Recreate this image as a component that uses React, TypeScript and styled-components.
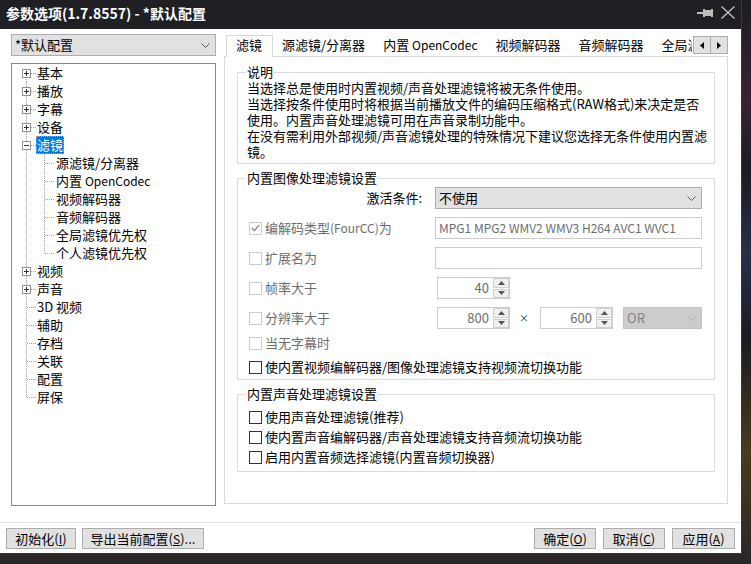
import React from "react";
import styled, { createGlobalStyle } from "styled-components";

const FONT = `"Noto Sans CJK SC", "Noto Sans CJK JP", "Noto Sans", sans-serif`;

const GlobalStyle = createGlobalStyle`
  *, *::before, *::after { box-sizing: border-box; }
  html, body { margin: 0; padding: 0; }
  body {
    width: 751px; height: 564px; overflow: hidden;
    background: #1d1b22;
    font-family: ${FONT}; font-size: 13px; color: #000;
  }
`;

const Desktop = styled.div`
  width: 751px;
  height: 564px;
  overflow: hidden;
  background:
    linear-gradient(180deg, #1e1c24 0%, #3a2233 18%, #1c1a22 30%, #27304a 45%, #1c1a22 60%, #4a3a1e 80%, #2a2627 100%);
`;

const Window = styled.div`
  width: 742px;
  height: 554px;
  background: #fff;
  border-right: 1px solid #3a3a3a;
  border-bottom: 1px solid #3a3a3a;
  display: flex;
  flex-direction: column;
`;

const TitleBar = styled.div`
  height: 29px;
  flex: none;
  background: #1f1f24;
  color: #fff;
  display: flex;
  align-items: center;
  padding: 0 6px 4px 6px;
  gap: 8px;
`;

const TitleText = styled.div`
  flex: 1;
  font-size: 14px;
  line-height: 18px;
  font-weight: 700;
  white-space: nowrap;
`;

const Lat = styled.span`
  font-size: 12px;
`;

const Main = styled.div`
  height: 493px;
  flex: none;
  display: flex;
  gap: 8px;
  padding: 5px 0 0 11px;
`;

const LeftCol = styled.div`
  width: 205px;
  display: flex;
  flex-direction: column;
  gap: 7px;
`;

const RightCol = styled.div`
  width: 504px;
  display: flex;
  flex-direction: column;
`;

const Combo = styled.div<{ $w?: number; $disabled?: boolean }>`
  height: 22px;
  ${(p) => (p.$w ? `width: ${p.$w}px; flex: none;` : "")}
  border: 1px solid ${(p) => (p.$disabled ? "#c2c2c2" : "#adadad")};
  background: ${(p) => (p.$disabled ? "#cccccc" : "#e1e1e1")};
  color: ${(p) => (p.$disabled ? "#838383" : "#000")};
  display: flex;
  align-items: center;
  justify-content: space-between;
  padding: 0 5px 0 3px;
  font-size: 13px;
  line-height: 18px;
  white-space: nowrap;
`;

const Tree = styled.ul`
  height: 443px;
  margin: 0;
  padding: 0;
  list-style: none;
  border: 1px solid #828790;
  background: #fff;
  overflow: hidden;
`;

const TreeRow = styled.li`
  height: 18px;
  display: flex;
  align-items: stretch;
`;

const TreeLabel = styled.span<{ $selected?: boolean }>`
  height: 18px;
  line-height: 16px;
  font-size: 13px;
  white-space: nowrap;
  border: 1px ${(p) => (p.$selected ? "dotted #f0a040" : "solid transparent")};
  background: ${(p) => (p.$selected ? "#0078d7" : "transparent")};
  color: ${(p) => (p.$selected ? "#fff" : "#000")};
`;

const TabStrip = styled.div`
  height: 23px;
  margin-bottom: -1px;
  display: flex;
  align-items: flex-end;
`;

const Tabs = styled.div`
  flex: 1;
  min-width: 0;
  height: 23px;
  overflow: hidden;
  display: flex;
  align-items: flex-end;
  padding-left: 2px;
`;

const Tab = styled.div<{ $active?: boolean }>`
  flex: none;
  white-space: nowrap;
  font-size: 13px;
  line-height: 18px;
  ${(p) =>
    p.$active
      ? `height: 22px; position: relative; z-index: 1; background: #fff;
         border: 1px solid #d9d9d9; border-bottom: none; padding: 0 10px 0 9px;`
      : `height: 20px; margin-bottom: 1px; padding: 0 9px;`}
`;

const Scroller = styled.div`
  align-self: flex-start;
  margin: 2px 0 0 1px;
  display: flex;
`;

const ScrollBtn = styled.div`
  width: 18px;
  height: 18px;
  border: 1px solid #adadad;
  background: #e1e1e1;
  display: flex;
  align-items: center;
  justify-content: center;
  & + & { margin-left: -1px; }
`;

const Panel = styled.div`
  height: 448px;
  border: 1px solid #d9d9d9;
  background: #fff;
  padding: 7px 12px 0 12px;
  display: flex;
  flex-direction: column;
  gap: 6px;
`;

const Group = styled.fieldset<{ $pt: number; $pb: number }>`
  margin: 0;
  min-width: 0;
  border: 1px solid #dcdcdc;
  padding: ${(p) => p.$pt}px 11px ${(p) => p.$pb}px 11px;
`;

const Legend = styled.legend`
  padding: 0 1px;
  margin-left: -3px;
  font-size: 13px;
  line-height: 16px;
`;

const Desc = styled.div`
  margin-left: -2px;
  font-size: 13px;
  line-height: 16px;
  white-space: nowrap;
`;

const FormRow = styled.div<{ $mt: number }>`
  height: 22px;
  margin-top: ${(p) => p.$mt}px;
  display: grid;
  grid-template-columns: 186px 267px;
  align-items: center;
`;

const RightLabel = styled.div`
  text-align: right;
  padding-right: 13px;
  font-size: 13px;
  line-height: 18px;
  white-space: nowrap;
`;

const TextBox = styled.div`
  height: 22px;
  border: 1px solid #cccccc;
  background: #fff;
  color: #6d6d6d;
  padding: 0 3px;
  font-size: 12px;
  line-height: 20px;
  white-space: nowrap;
  overflow: hidden;
`;

const Inline = styled.div`
  display: flex;
  align-items: center;
`;

const SpinBox = styled.div`
  width: 73px;
  height: 22px;
  flex: none;
  margin-left: 2px;
  border: 1px solid #cccccc;
  background: #fff;
  display: flex;
`;

const SpinValue = styled.div`
  flex: 1;
  text-align: right;
  padding-right: 4px;
  color: #6d6d6d;
  font-size: 13px;
  line-height: 20px;
`;

const SpinButtons = styled.div`
  width: 16px;
  display: flex;
  flex-direction: column;
  gap: 1px;
`;

const SpinBtn = styled.div`
  flex: 1;
  border: 1px solid #d0d0d0;
  background: #f0f0f0;
  display: flex;
  align-items: center;
  justify-content: center;
`;

const Times = styled.div`
  width: 28px;
  text-align: center;
  color: #333;
  font-size: 10px;
  line-height: 12px;
`;

const CheckRow = styled.label<{ $mt: number; $disabled?: boolean }>`
  height: 16px;
  margin-top: ${(p) => p.$mt}px;
  display: flex;
  align-items: center;
  gap: 3px;
  font-size: 13px;
  line-height: 16px;
  white-space: nowrap;
  color: ${(p) => (p.$disabled ? "#6d6d6d" : "#000")};
`;

const Box = styled.span<{ $disabled?: boolean }>`
  width: 13px;
  height: 13px;
  flex: none;
  border: 1px solid ${(p) => (p.$disabled ? "#cccccc" : "#333333")};
  background: #fff;
  display: flex;
  align-items: center;
  justify-content: center;
`;

const Footer = styled.div`
  flex: 1;
  border-top: 1px solid #e3e3e3;
  display: flex;
  align-items: flex-start;
  justify-content: space-between;
  padding: 5px 6px 0 6px;
`;

const BtnGroup = styled.div<{ $gap: number }>`
  display: flex;
  gap: ${(p) => p.$gap}px;
`;

const Btn = styled.button<{ $w: number }>`
  width: ${(p) => p.$w}px;
  height: 21px;
  margin: 0;
  padding: 0;
  border: 1px solid #adadad;
  background: #e1e1e1;
  color: #000;
  font-family: ${FONT};
  font-size: 13px;
  line-height: 17px;
  white-space: nowrap;
  u { text-decoration: underline; text-underline-offset: 1px; font-size: 12px; }
`;

/* ---------- drawings ---------- */

const Chevron = ({ color = "#555" }: { color?: string }) => (
  <svg width="9" height="5" viewBox="0 0 9 5">
    <path d="M0.5 0.5 L4.5 4.5 L8.5 0.5" fill="none" stroke={color} strokeWidth="1" />
  </svg>
);

const Pin = () => (
  <svg width="16" height="12" viewBox="0 0 16 12" shapeRendering="crispEdges">
    <rect x="0" y="5" width="6" height="2" fill="#bdbdbd" />
    <rect x="6" y="2" width="2" height="8" fill="#bdbdbd" />
    <rect x="8" y="3" width="6" height="6" fill="#bdbdbd" />
    <rect x="14" y="2" width="2" height="8" fill="#bdbdbd" />
  </svg>
);

const CloseX = () => (
  <svg width="14" height="13" viewBox="0 0 14 13">
    <path d="M0.5 0.5 L13.5 12.5 M13.5 0.5 L0.5 12.5" stroke="#c4c4c4" strokeWidth="1.3" />
  </svg>
);

const Tri = ({ dir }: { dir: "left" | "right" }) => (
  <svg width="4" height="7" viewBox="0 0 4 7">
    <path d={dir === "left" ? "M4 0 L0 3.5 L4 7Z" : "M0 0 L4 3.5 L0 7Z"} fill="#000" />
  </svg>
);

const SpinArrow = ({ up }: { up?: boolean }) => (
  <svg width="7" height="4" viewBox="0 0 7 4">
    <path d={up ? "M0 4 L3.5 0 L7 4Z" : "M0 0 L3.5 4 L7 0Z"} fill="#555" />
  </svg>
);

const Check = () => (
  <svg width="9" height="8" viewBox="0 0 9 8">
    <path d="M0.8 4 L3.3 6.6 L8.2 1" fill="none" stroke="#8f8f8f" strokeWidth="1.4" />
  </svg>
);

const DOT = "#a0a0a0";

const TopGutter = ({
  first,
  last,
  exp,
}: {
  first?: boolean;
  last?: boolean;
  exp?: "plus" | "minus";
}) => (
  <svg width="24" height="18" viewBox="0 0 24 18" shapeRendering="crispEdges">
    <line x1="14.5" y1={first ? 9 : 0} x2="14.5" y2={last ? 10 : 18} stroke={DOT} strokeDasharray="1 1" />
    <line x1={exp ? 19 : 15} y1="9.5" x2="24" y2="9.5" stroke={DOT} strokeDasharray="1 1" />
    {exp && (
      <>
        <rect x="10.5" y="5.5" width="8" height="8" fill="#fff" stroke="#919191" />
        <line x1="12" y1="9.5" x2="17" y2="9.5" stroke="#333" />
        {exp === "plus" && <line x1="14.5" y1="7" x2="14.5" y2="12" stroke="#333" />}
      </>
    )}
  </svg>
);

const ChildGutter = ({ last }: { last?: boolean }) => (
  <>
    <svg width="24" height="18" viewBox="0 0 24 18" shapeRendering="crispEdges">
      <line x1="14.5" y1="0" x2="14.5" y2="18" stroke={DOT} strokeDasharray="1 1" />
    </svg>
    <svg width="19" height="18" viewBox="0 0 19 18" shapeRendering="crispEdges">
      <line x1="8.5" y1="0" x2="8.5" y2={last ? 10 : 18} stroke={DOT} strokeDasharray="1 1" />
      <line x1="9" y1="9.5" x2="19" y2="9.5" stroke={DOT} strokeDasharray="1 1" />
    </svg>
  </>
);

/* ---------- data ---------- */

const OpenCodec = () => (
  <>
    内置 <Lat>OpenCodec</Lat>
  </>
);

type Node = { key: string; label: React.ReactNode; exp?: "plus" | "minus"; selected?: boolean; children?: { key: string; label: React.ReactNode }[] };

const tree: Node[] = [
  { key: "基本", label: "基本", exp: "plus" },
  { key: "播放", label: "播放", exp: "plus" },
  { key: "字幕", label: "字幕", exp: "plus" },
  { key: "设备", label: "设备", exp: "plus" },
  {
    key: "滤镜",
    label: "滤镜",
    exp: "minus",
    selected: true,
    children: [
      { key: "c1", label: "源滤镜/分离器" },
      { key: "c2", label: <OpenCodec /> },
      { key: "c3", label: "视频解码器" },
      { key: "c4", label: "音频解码器" },
      { key: "c5", label: "全局滤镜优先权" },
      { key: "c6", label: "个人滤镜优先权" },
    ],
  },
  { key: "视频", label: "视频", exp: "plus" },
  { key: "声音", label: "声音", exp: "plus" },
  { key: "3d", label: "3D 视频" },
  { key: "辅助", label: "辅助" },
  { key: "存档", label: "存档" },
  { key: "关联", label: "关联" },
  { key: "配置", label: "配置" },
  { key: "屏保", label: "屏保" },
];

const tabs: { key: string; label: React.ReactNode }[] = [
  { key: "t1", label: "滤镜" },
  { key: "t2", label: "源滤镜/分离器" },
  { key: "t3", label: <OpenCodec /> },
  { key: "t4", label: "视频解码器" },
  { key: "t5", label: "音频解码器" },
  { key: "t6", label: "全局滤镜优先权" },
  { key: "t7", label: "个人滤镜优先权" },
];

const descLines = [
  "当选择总是使用时内置视频/声音处理滤镜将被无条件使用。",
  "当选择按条件使用时将根据当前播放文件的编码压缩格式(RAW格式)来决定是否",
  "使用。内置声音处理滤镜可用在声音录制功能中。",
  "在没有需利用外部视频/声音滤镜处理的特殊情况下建议您选择无条件使用内置滤",
  "镜。",
];

const CheckItem = ({
  label,
  mt,
  disabled,
  checked,
}: {
  label: React.ReactNode;
  mt: number;
  disabled?: boolean;
  checked?: boolean;
}) => (
  <CheckRow $mt={mt} $disabled={disabled}>
    <Box $disabled={disabled}>{checked && <Check />}</Box>
    <span>{label}</span>
  </CheckRow>
);

const Spin = ({ value }: { value: string }) => (
  <SpinBox>
    <SpinValue>{value}</SpinValue>
    <SpinButtons>
      <SpinBtn>
        <SpinArrow up />
      </SpinBtn>
      <SpinBtn>
        <SpinArrow />
      </SpinBtn>
    </SpinButtons>
  </SpinBox>
);

export default function App() {
  const rows: React.ReactNode[] = [];
  tree.forEach((n, i) => {
    rows.push(
      <TreeRow key={n.key}>
        <TopGutter first={i === 0} last={i === tree.length - 1} exp={n.exp} />
        <TreeLabel $selected={n.selected}>{n.label}</TreeLabel>
      </TreeRow>
    );
    n.children?.forEach((c, j) => {
      rows.push(
        <TreeRow key={c.key}>
          <ChildGutter last={j === n.children!.length - 1} />
          <TreeLabel>{c.label}</TreeLabel>
        </TreeRow>
      );
    });
  });

  return (
    <>
      <GlobalStyle />
      <Desktop>
        <Window>
          <TitleBar>
            <TitleText>参数选项(1.7.8557) - *默认配置</TitleText>
            <Pin />
            <CloseX />
          </TitleBar>
          <Main>
            <LeftCol>
              <Combo>
                <span>*默认配置</span>
                <Chevron />
              </Combo>
              <Tree>{rows}</Tree>
            </LeftCol>
            <RightCol>
              <TabStrip>
                <Tabs>
                  {tabs.map((t, i) => (
                    <Tab key={t.key} $active={i === 0}>
                      {t.label}
                    </Tab>
                  ))}
                </Tabs>
                <Scroller>
                  <ScrollBtn>
                    <Tri dir="left" />
                  </ScrollBtn>
                  <ScrollBtn>
                    <Tri dir="right" />
                  </ScrollBtn>
                </Scroller>
              </TabStrip>
              <Panel>
                <Group $pt={0} $pb={3}>
                  <Legend>说明</Legend>
                  {descLines.map((l) => (
                    <Desc key={l}>{l}</Desc>
                  ))}
                </Group>
                <Group $pt={1} $pb={4}>
                  <Legend>内置图像处理滤镜设置</Legend>
                  <FormRow $mt={0}>
                    <RightLabel>激活条件:</RightLabel>
                    <Combo>
                      <span>不使用</span>
                      <Chevron />
                    </Combo>
                  </FormRow>
                  <FormRow $mt={8}>
                    <CheckItem
                      label={
                        <>
                          编解码类型<Lat>(FourCC)</Lat>为
                        </>
                      }
                      mt={0}
                      disabled
                      checked
                    />
                    <TextBox>MPG1 MPG2 WMV2 WMV3 H264 AVC1 WVC1</TextBox>
                  </FormRow>
                  <FormRow $mt={8}>
                    <CheckItem label="扩展名为" mt={0} disabled />
                    <TextBox />
                  </FormRow>
                  <FormRow $mt={8}>
                    <CheckItem label="帧率大于" mt={0} disabled />
                    <Inline>
                      <Spin value="40" />
                    </Inline>
                  </FormRow>
                  <FormRow $mt={8}>
                    <CheckItem label="分辨率大于" mt={0} disabled />
                    <Inline>
                      <Spin value="800" />
                      <Times>×</Times>
                      <Spin value="600" />
                      <Combo $w={79} $disabled style={{ marginLeft: 10 }}>
                        <span>OR</span>
                        <Chevron color="#a8a8a8" />
                      </Combo>
                    </Inline>
                  </FormRow>
                  <CheckItem label="当无字幕时" mt={6} disabled />
                  <CheckItem label="使内置视频编解码器/图像处理滤镜支持视频流切换功能" mt={8} />
                </Group>
                <Group $pt={7} $pb={6}>
                  <Legend>内置声音处理滤镜设置</Legend>
                  <CheckItem label="使用声音处理滤镜(推荐)" mt={0} />
                  <CheckItem label="使内置声音编解码器/声音处理滤镜支持音频流切换功能" mt={4} />
                  <CheckItem label="启用内置音频选择滤镜(内置音频切换器)" mt={4} />
                </Group>
              </Panel>
            </RightCol>
          </Main>
          <Footer>
            <BtnGroup $gap={6}>
              <Btn $w={70}>
                初始化(<u>I</u>)
              </Btn>
              <Btn $w={122}>
                导出当前配置(<u>S</u>)...
              </Btn>
            </BtnGroup>
            <BtnGroup $gap={7}>
              <Btn $w={62}>
                确定(<u>O</u>)
              </Btn>
              <Btn $w={62}>
                取消(<u>C</u>)
              </Btn>
              <Btn $w={63}>
                应用(<u>A</u>)
              </Btn>
            </BtnGroup>
          </Footer>
        </Window>
      </Desktop>
    </>
  );
}
